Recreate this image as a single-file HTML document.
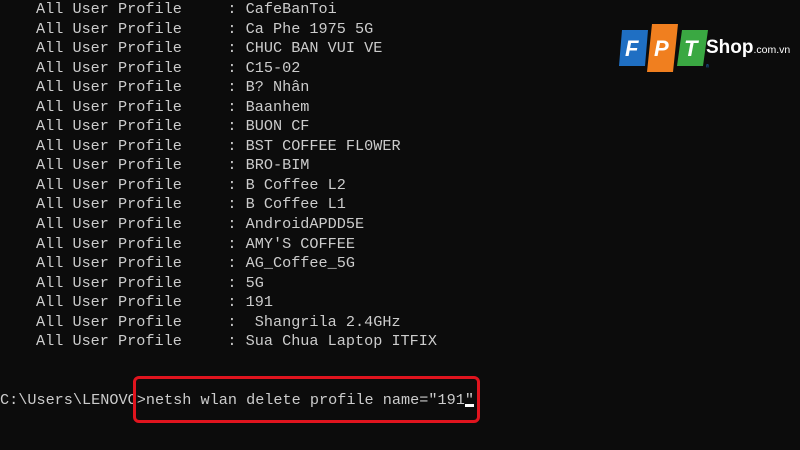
<!DOCTYPE html>
<html><head><meta charset="utf-8"><style>
body{margin:0;width:800px;height:450px;background:#0c0c0c;overflow:hidden;position:relative;font-family:"Liberation Mono",monospace;color:#cccccc}
.l{position:absolute;left:36px;font-size:15.2px;white-space:pre;line-height:19.55px}
.box{position:absolute;left:133px;top:376px;width:341px;height:41px;border:3px solid #e0141e;border-radius:6px}
</style></head><body>
<div class="l" style="top:0px">All User Profile     : CafeBanToi
All User Profile     : Ca Phe 1975 5G
All User Profile     : CHUC BAN VUI VE
All User Profile     : C15-02
All User Profile     : B? Nhân
All User Profile     : Baanhem
All User Profile     : BUON CF
All User Profile     : BST COFFEE FL0WER
All User Profile     : BRO-BIM
All User Profile     : B Coffee L2
All User Profile     : B Coffee L1
All User Profile     : AndroidAPDD5E
All User Profile     : AMY'S COFFEE
All User Profile     : AG_Coffee_5G
All User Profile     : 5G
All User Profile     : 191
All User Profile     :  Shangrila 2.4GHz
All User Profile     : Sua Chua Laptop ITFIX</div>
<div class="l" style="left:0;top:390px;line-height:20px">C:\Users\LENOVO&gt;netsh wlan delete profile name="191"<span style="display:inline-block;width:9px;height:3px;background:#fff;vertical-align:-3px;margin-left:-9px"></span></div>
<div class="box"></div>
<svg style="position:absolute;left:612px;top:22px" width="190" height="55">
<path d="M10 8 L36 8 L33 44 L7 44 Z" fill="#1f6fc3"/>
<path d="M40 2 L66 2 L61 50 L35 50 Z" fill="#f07f1f"/>
<path d="M70 8 L96 8 L91 44 L65 44 Z" fill="#3aa842"/>
<text x="13" y="34" font-family="Liberation Sans" font-weight="bold" font-style="italic" font-size="22" fill="#fff">F</text>
<text x="42" y="34" font-family="Liberation Sans" font-weight="bold" font-style="italic" font-size="22" fill="#fff">P</text>
<text x="72" y="34" font-family="Liberation Sans" font-weight="bold" font-style="italic" font-size="22" fill="#fff">T</text>
<text x="94" y="46" font-size="5" fill="#1f6fc3">®</text>
<text x="94" y="31" font-family="Liberation Sans" font-weight="bold" font-size="19" fill="#fff">Shop<tspan font-size="10.5" font-weight="normal">.com.vn</tspan></text>
</svg>
</body></html>
